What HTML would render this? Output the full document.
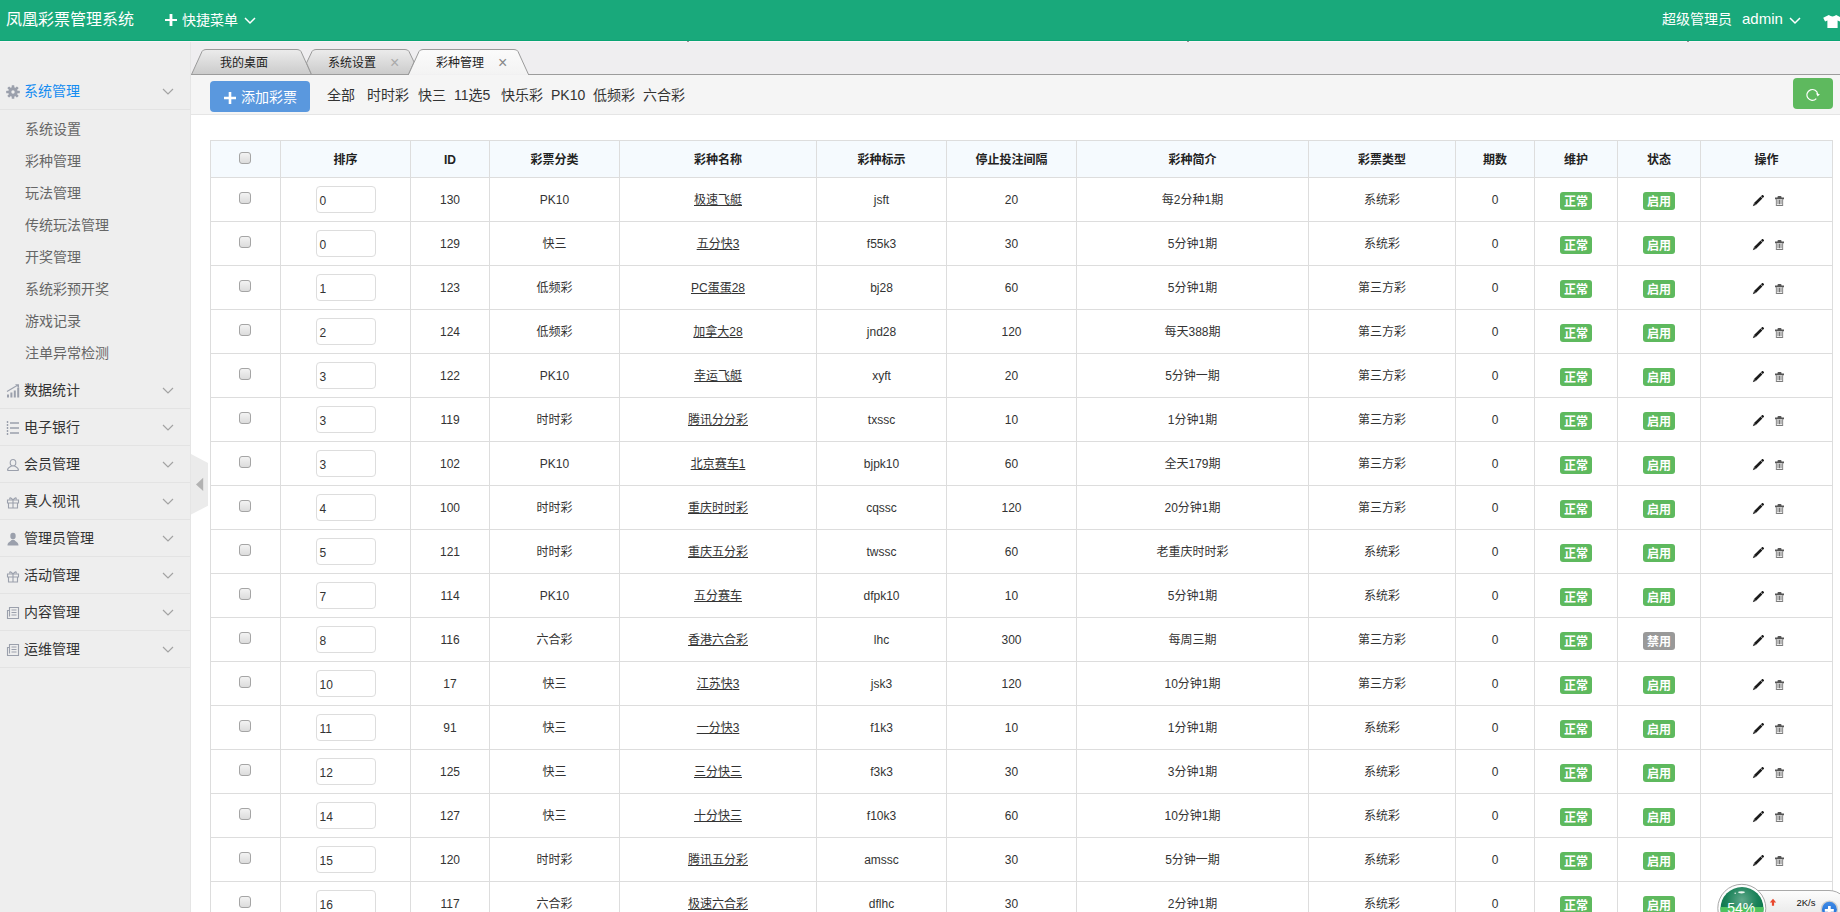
<!DOCTYPE html>
<html lang="zh-CN">
<head>
<meta charset="utf-8">
<title>凤凰彩票管理系统</title>
<style>
*{box-sizing:border-box;margin:0;padding:0}
html,body{width:1840px;height:912px;overflow:hidden;background:#fff}
body{font-family:"Liberation Sans","Noto Sans CJK SC",sans-serif;font-size:12px;color:#333;position:relative}
.abs{position:absolute}
/* header */
#hd{position:absolute;left:0;top:0;width:1840px;height:41px;background:#19a97b;color:#fff;border-bottom:1px solid #0aa473}
#hdl{position:absolute;left:0;top:41px;width:1840px;height:1px;background:#fbf3f8}
#hd .t{position:absolute;white-space:nowrap;line-height:20px}
#logo{left:6px;top:10px;font-size:16px}
#quick{left:182px;top:10px;font-size:14px}
#role{left:1662px;top:9px;font-size:14px}
#adm{left:1742px;top:9px;font-size:15px}
/* sidebar */
#sb{position:absolute;left:0;top:41px;width:191px;height:871px;background:#eeeeee;border-right:1px solid #e5e5e5}
.mh{position:absolute;left:0;width:190px;height:37px;border-bottom:1px solid #e3e3e3;font-size:14px;color:#333}
.mh span.tx{position:absolute;left:24px;top:8px;line-height:20px;white-space:nowrap}
.mh svg.mi{position:absolute;left:5.500px;top:11.500px;width:14px;height:14px}
.mh svg.ar{position:absolute;left:162px;top:14.500px;width:12px;height:8px}
.sub{position:absolute;left:25px;font-size:14px;color:#666;line-height:20px;white-space:nowrap}
/* tabs */
#tabbar{position:absolute;left:191px;top:41px;width:1649px;height:34px;background:#efeef0}
.tabline{position:absolute;left:191px;top:74px;width:1649px;height:1px;background:#9c9c9c}
.tabtx{position:absolute;top:53px;font-size:12px;line-height:20px;color:#222;white-space:nowrap}
.tabx{position:absolute;top:53px;font-size:16px;line-height:20px;color:#aaa}
/* toolbar */
#tool{position:absolute;left:191px;top:75px;width:1649px;height:40px;background:#f5f5f5;border-bottom:1px solid #e5e5e5}
#addbtn{position:absolute;left:210px;top:81px;width:100px;height:31px;border-radius:4px;background:#5a98de;color:#fff;font-size:14px;line-height:31px;white-space:nowrap}
#addbtn span{position:absolute;left:31px;top:1px}
.flt{position:absolute;top:85px;font-size:14px;line-height:20px;color:#333;white-space:nowrap}
#refbtn{position:absolute;left:1793px;top:78px;width:40px;height:31px;border-radius:4px;background:#5eb95e}
/* table */
#tb{position:absolute;left:210px;top:140px;width:1622px;border-collapse:collapse;table-layout:fixed;font-size:12px;color:#333}
#tb th,#tb td{border:1px solid #ddd;text-align:center;vertical-align:middle;padding:0;white-space:nowrap;line-height:20px}
#tb th{height:37px;background:#f5fafe;font-weight:bold;color:#222;padding-top:2px}
#tb td{height:44px}
.cb{display:inline-block;width:12px;height:12px;border:1px solid #a5a5a5;border-radius:3px;background:linear-gradient(#f3f3f3,#dcdcdc);position:relative;top:0px;left:-1px}
#tb th .cb{top:0px}
.inp{display:inline-block;width:60px;height:27px;border:1px solid #ddd;border-radius:4px;text-align:left;padding-left:3px;line-height:29px;overflow:hidden;font-size:12px;color:#333;background:#fff;vertical-align:middle}
u{text-decoration:underline}
i.z{font-style:normal;position:relative;top:0px}
.lb{display:inline-block;height:18px;line-height:21px;overflow:hidden;padding:0 4px;border-radius:3px;color:#fff;font-weight:bold;font-size:12px;position:relative;top:4px}
.ok{background:#5eb95e}
.off{background:#999}
.ic{display:inline-block;vertical-align:middle}
.pen{width:12px;height:12px;margin-right:10.500px;position:relative;top:1px;left:1.500px}
.tr{width:9px;height:10.500px;position:relative;top:0.500px;left:2px}
</style>
</head>
<body>
<div id="hd">
  <div class="t" id="logo">凤凰彩票管理系统</div>
  <svg class="abs" style="left:165px;top:14px" width="12" height="12" viewBox="0 0 12 12"><path d="M4.600 0h2.800v4.900h4.600v2.200H7.400v4.900H4.600V7.100H0V4.900h4.600z" fill="#fff"/></svg>
  <div class="t" id="quick">快捷菜单</div>
  <svg class="abs" style="left:243.500px;top:16.500px" width="12" height="8" viewBox="0 0 12 8"><path d="M1 1l5 5 5-5" fill="none" stroke="#fff" stroke-width="1.5"/></svg>
  <div class="t" id="role">超级管理员</div>
  <div class="t" id="adm">admin</div>
  <svg class="abs" style="left:1789px;top:17px" width="12" height="8" viewBox="0 0 12 8"><path d="M1 1l5 5 5-5" fill="none" stroke="#fff" stroke-width="1.5"/></svg>
  <svg class="abs" style="left:1823px;top:15px" width="19" height="13" viewBox="0 0 20 14"><path d="M6 0 Q10 3 14 0 L20 3 L18 7 L15.5 6 V14 H4.5 V6 L2 7 L0 3 Z" fill="#fff"/></svg>
</div>

<div id="sb">
  <div class="mh" style="top:32px;color:#148cf1"><svg class="mi" style="left:6px;top:12px;width:14px;height:14px" viewBox="0 0 14 14"><g fill="#9ba0ac"><rect x="5.700" y="0.200" width="2.600" height="3" rx="0.500" transform="rotate(0 7 7)"/><rect x="5.700" y="0.200" width="2.600" height="3" rx="0.500" transform="rotate(45 7 7)"/><rect x="5.700" y="0.200" width="2.600" height="3" rx="0.500" transform="rotate(90 7 7)"/><rect x="5.700" y="0.200" width="2.600" height="3" rx="0.500" transform="rotate(135 7 7)"/><rect x="5.700" y="0.200" width="2.600" height="3" rx="0.500" transform="rotate(180 7 7)"/><rect x="5.700" y="0.200" width="2.600" height="3" rx="0.500" transform="rotate(225 7 7)"/><rect x="5.700" y="0.200" width="2.600" height="3" rx="0.500" transform="rotate(270 7 7)"/><rect x="5.700" y="0.200" width="2.600" height="3" rx="0.500" transform="rotate(315 7 7)"/></g><circle cx="7" cy="7" r="3.200" fill="none" stroke="#9ba0ac" stroke-width="3"/></svg><span class="tx">系统管理</span><svg class="ar" viewBox="0 0 12 8"><path d="M1 1l5 5 5-5" fill="none" stroke="#a3a3a3" stroke-width="1.200"/></svg></div>
  <div class="sub" style="top:78px">系统设置</div>
  <div class="sub" style="top:110px">彩种管理</div>
  <div class="sub" style="top:142px">玩法管理</div>
  <div class="sub" style="top:174px">传统玩法管理</div>
  <div class="sub" style="top:206px">开奖管理</div>
  <div class="sub" style="top:238px">系统彩预开奖</div>
  <div class="sub" style="top:270px">游戏记录</div>
  <div class="sub" style="top:302px">注单异常检测</div>
  <div class="mh" style="top:331px"><svg class="mi" viewBox="0 0 14 14"><path d="M1 13.500V10.500h2V13.500zM4.400 13.500V8.500h2V13.500zM7.800 13.500V6.500h2V13.500zM11.200 13.500V3.500h2V13.500z" fill="#9ba0ac"/><path d="M1 7.500L11.500 1.200" fill="none" stroke="#9ba0ac" stroke-width="1.100"/><path d="M9 0.300h4v3.600z" fill="#9ba0ac"/></svg><span class="tx">数据统计</span><svg class="ar" viewBox="0 0 12 8"><path d="M1 1l5 5 5-5" fill="none" stroke="#a3a3a3" stroke-width="1.200"/></svg></div>
  <div class="mh" style="top:368px"><svg class="mi" viewBox="0 0 14 14"><path d="M4 2h9M4 7h9M4 12h9" stroke="#9ba0ac" stroke-width="1.6" fill="none"/><path d="M1.5 0v14" stroke="#9ba0ac" stroke-width="1.4" stroke-dasharray="2 1" fill="none"/></svg><span class="tx">电子银行</span><svg class="ar" viewBox="0 0 12 8"><path d="M1 1l5 5 5-5" fill="none" stroke="#a3a3a3" stroke-width="1.200"/></svg></div>
  <div class="mh" style="top:405px"><svg class="mi" viewBox="0 0 14 14"><path d="M7 1.5a2.8 3.2 0 0 1 0 6.4a2.8 3.2 0 0 1 0-6.4zM1.5 12.5c0-3 2.5-3.5 4-4.4M12.5 12.5c0-3-2.5-3.5-4-4.4M1.5 12.5h11" fill="none" stroke="#9ba0ac" stroke-width="1.1"/></svg><span class="tx">会员管理</span><svg class="ar" viewBox="0 0 12 8"><path d="M1 1l5 5 5-5" fill="none" stroke="#a3a3a3" stroke-width="1.200"/></svg></div>
  <div class="mh" style="top:442px"><svg class="mi" viewBox="0 0 14 14"><path d="M1.5 5h11v3h-11zM2.5 8v5h9V8M7 5v8M7 5C5 2 3 2.5 4 4.2M7 5c2-3 4-2.5 3-.8" fill="none" stroke="#9ba0ac" stroke-width="1.1"/></svg><span class="tx">真人视讯</span><svg class="ar" viewBox="0 0 12 8"><path d="M1 1l5 5 5-5" fill="none" stroke="#a3a3a3" stroke-width="1.200"/></svg></div>
  <div class="mh" style="top:479px"><svg class="mi" viewBox="0 0 14 14"><path d="M7 0.800a2.700 3.300 0 0 1 0 6.600a2.700 3.300 0 0 1 0-6.600zM1.500 13.500c0-3.600 2.700-3.200 4-5.500h3c1.300 2.300 4 1.900 4 5.500z" fill="#9ba0ac"/></svg><span class="tx">管理员管理</span><svg class="ar" viewBox="0 0 12 8"><path d="M1 1l5 5 5-5" fill="none" stroke="#a3a3a3" stroke-width="1.200"/></svg></div>
  <div class="mh" style="top:516px"><svg class="mi" viewBox="0 0 14 14"><path d="M1.5 5h11v3h-11zM2.5 8v5h9V8M7 5v8M7 5C5 2 3 2.5 4 4.2M7 5c2-3 4-2.5 3-.8" fill="none" stroke="#9ba0ac" stroke-width="1.1"/></svg><span class="tx">活动管理</span><svg class="ar" viewBox="0 0 12 8"><path d="M1 1l5 5 5-5" fill="none" stroke="#a3a3a3" stroke-width="1.200"/></svg></div>
  <div class="mh" style="top:553px"><svg class="mi" viewBox="0 0 14 14"><path d="M3.500 1.500h9v11h-11v-8h2zM3.500 1.500v9M5.500 4h5M5.500 6.500h5M5.500 9h5" fill="none" stroke="#9ba0ac" stroke-width="1.1"/></svg><span class="tx">内容管理</span><svg class="ar" viewBox="0 0 12 8"><path d="M1 1l5 5 5-5" fill="none" stroke="#a3a3a3" stroke-width="1.200"/></svg></div>
  <div class="mh" style="top:590px"><svg class="mi" viewBox="0 0 14 14"><path d="M3.500 1.500h9v11h-11v-8h2zM3.500 1.500v9M5.500 4h5M5.500 6.500h5M5.500 9h5" fill="none" stroke="#9ba0ac" stroke-width="1.1"/></svg><span class="tx">运维管理</span><svg class="ar" viewBox="0 0 12 8"><path d="M1 1l5 5 5-5" fill="none" stroke="#a3a3a3" stroke-width="1.200"/></svg></div>
</div>
<!-- collapse handle -->
<svg class="abs" style="left:191px;top:454px" width="17" height="61" viewBox="0 0 17 61"><path d="M0 0 L17 9 V51.800 L0 60.500 Z" fill="#ebebeb"/><path d="M12.200 23.800 V37 L5 30.400 Z" fill="#b2b2b2"/></svg>

<div id="tabbar"></div>
<div id="hdl"></div>
<div class="abs" style="left:687px;top:41px;width:2px;height:1px;background:#9b8d93"></div><div class="abs" style="left:1187px;top:41px;width:2px;height:1px;background:#9b8d93"></div><div class="abs" style="left:1687px;top:41px;width:2px;height:1px;background:#9b8d93"></div>
<svg class="abs" style="left:191px;top:48px" width="350" height="27" viewBox="0 0 350 27">
  <defs>
    <linearGradient id="g1" x1="0" y1="0" x2="0" y2="1"><stop offset="0" stop-color="#ececec"/><stop offset="1" stop-color="#cbcbcb"/></linearGradient>
    <linearGradient id="g2" x1="0" y1="0" x2="0" y2="1"><stop offset="0" stop-color="#fbfbfb"/><stop offset="1" stop-color="#f3f3f3"/></linearGradient>
  </defs>
  <path d="M0.500 26.500 L11 3.500 Q12 1.500 15 1.500 H106 Q109 1.500 110 3.500 L120.500 26.500 Z" fill="url(#g1)" stroke="#9a9a9a" stroke-width="1"/>
  <path d="M120.500 26.500 L115.500 15 L121 3.500 Q122 1.500 125 1.500 H214 Q217 1.500 218 3.500 L223 14 L217.500 26.500 Z" fill="url(#g1)" stroke="#9a9a9a" stroke-width="1"/>
  <path d="M217.500 26.500 L228 3.500 Q229 1.500 232 1.500 H323 Q326 1.500 327 3.500 L337.500 26.500" fill="url(#g2)" stroke="#9a9a9a" stroke-width="1"/>
</svg>
<div class="tabline" style="left:191px;width:218px"></div>
<div class="tabline" style="left:528px;width:1312px"></div>
<div class="tabtx" style="left:220px">我的桌面</div>
<div class="tabtx" style="left:328px">系统设置</div>
<div class="tabx" style="left:390px">×</div>
<div class="tabtx" style="left:436px">彩种管理</div>
<div class="tabx" style="left:498px;color:#888">×</div>

<div id="tool"></div>
<div id="addbtn"><svg class="abs" style="left:14px;top:11px" width="12" height="12" viewBox="0 0 12 12"><path d="M4.700 0h2.600v4.800h4.700v2.400H7.300v4.800H4.700V7.200H0V4.800h4.700z" fill="#fff"/></svg><span>添加彩票</span></div>
<div class="flt" style="left:327px">全部</div>
<div class="flt" style="left:367px">时时彩</div>
<div class="flt" style="left:418px">快三</div>
<div class="flt" style="left:454px">11选5</div>
<div class="flt" style="left:501px">快乐彩</div>
<div class="flt" style="left:551px">PK10</div>
<div class="flt" style="left:593px">低频彩</div>
<div class="flt" style="left:643px">六合彩</div>
<div id="refbtn"><svg class="abs" style="left:13px;top:9px" width="16" height="16" viewBox="0 0 16 16"><path d="M10.300 11.600 A5.400 5.400 0 1 1 11.700 7.300" fill="none" stroke="#fff" stroke-width="1.150"/><path d="M10 6.300 L13.900 7.200 L11.600 9.500 Z" fill="#fff"/></svg></div>

<table id="tb">
<colgroup><col style="width:70px"><col style="width:130px"><col style="width:79px"><col style="width:130px"><col style="width:197px"><col style="width:130px"><col style="width:130px"><col style="width:232px"><col style="width:147px"><col style="width:79px"><col style="width:83px"><col style="width:83px"><col style="width:132px"></colgroup>
<thead><tr><th><span class="cb"></span></th><th>排序</th><th>ID</th><th>彩票分类</th><th>彩种名称</th><th>彩种标示</th><th>停止投注间隔</th><th>彩种简介</th><th>彩票类型</th><th>期数</th><th>维护</th><th>状态</th><th>操作</th></tr></thead>
<tbody>
<tr><td><span class="cb"></span></td><td><span class="inp">0</span></td><td>130</td><td>PK10</td><td><u><i class="z">极速飞艇</i></u></td><td>jsft</td><td>20</td><td><i class="z">每</i>2<i class="z">分种</i>1<i class="z">期</i></td><td><i class="z">系统彩</i></td><td>0</td><td><span class="lb ok">正常</span></td><td><span class="lb ok">启用</span></td><td class="op"><svg class="ic pen" viewBox="0 0 12 12"><g transform="rotate(45 6 6)" fill="#1c1c1c"><rect x="4.700" y="-1.700" width="2.600" height="2.300" rx="0.400"/><rect x="4.700" y="1.100" width="2.600" height="9.200"/><path d="M4.700 10.300 H7.300 L6 13.400 Z" fill="#2a2a2a"/></g></svg><svg class="ic tr" viewBox="0 0 9 10.500"><path d="M2.500 1.500 V1 Q2.500 0 3.500 0 H5.500 Q6.500 0 6.500 1 V1.500 H9 V3.200 H0 V1.500 Z" fill="#555"/><path d="M1.350 3.200 V9.600 Q1.350 10.100 1.850 10.100 H7.150 Q7.650 10.100 7.650 9.600 V3.200" fill="none" stroke="#666" stroke-width="0.800"/><path d="M1.500 9.300 H7.500 V10.500 H1.500 Z" fill="#555"/><path d="M3 3.800 V8.300 M4.500 3.800 V8.300 M6 3.800 V8.300" stroke="#666" stroke-width="0.900" fill="none"/></svg></td></tr>
<tr><td><span class="cb"></span></td><td><span class="inp">0</span></td><td>129</td><td><i class="z">快三</i></td><td><u><i class="z">五分快</i>3</u></td><td>f55k3</td><td>30</td><td>5<i class="z">分钟</i>1<i class="z">期</i></td><td><i class="z">系统彩</i></td><td>0</td><td><span class="lb ok">正常</span></td><td><span class="lb ok">启用</span></td><td class="op"><svg class="ic pen" viewBox="0 0 12 12"><g transform="rotate(45 6 6)" fill="#1c1c1c"><rect x="4.700" y="-1.700" width="2.600" height="2.300" rx="0.400"/><rect x="4.700" y="1.100" width="2.600" height="9.200"/><path d="M4.700 10.300 H7.300 L6 13.400 Z" fill="#2a2a2a"/></g></svg><svg class="ic tr" viewBox="0 0 9 10.500"><path d="M2.500 1.500 V1 Q2.500 0 3.500 0 H5.500 Q6.500 0 6.500 1 V1.500 H9 V3.200 H0 V1.500 Z" fill="#555"/><path d="M1.350 3.200 V9.600 Q1.350 10.100 1.850 10.100 H7.150 Q7.650 10.100 7.650 9.600 V3.200" fill="none" stroke="#666" stroke-width="0.800"/><path d="M1.500 9.300 H7.500 V10.500 H1.500 Z" fill="#555"/><path d="M3 3.800 V8.300 M4.500 3.800 V8.300 M6 3.800 V8.300" stroke="#666" stroke-width="0.900" fill="none"/></svg></td></tr>
<tr><td><span class="cb"></span></td><td><span class="inp">1</span></td><td>123</td><td><i class="z">低频彩</i></td><td><u>PC<i class="z">蛋蛋</i>28</u></td><td>bj28</td><td>60</td><td>5<i class="z">分钟</i>1<i class="z">期</i></td><td><i class="z">第三方彩</i></td><td>0</td><td><span class="lb ok">正常</span></td><td><span class="lb ok">启用</span></td><td class="op"><svg class="ic pen" viewBox="0 0 12 12"><g transform="rotate(45 6 6)" fill="#1c1c1c"><rect x="4.700" y="-1.700" width="2.600" height="2.300" rx="0.400"/><rect x="4.700" y="1.100" width="2.600" height="9.200"/><path d="M4.700 10.300 H7.300 L6 13.400 Z" fill="#2a2a2a"/></g></svg><svg class="ic tr" viewBox="0 0 9 10.500"><path d="M2.500 1.500 V1 Q2.500 0 3.500 0 H5.500 Q6.500 0 6.500 1 V1.500 H9 V3.200 H0 V1.500 Z" fill="#555"/><path d="M1.350 3.200 V9.600 Q1.350 10.100 1.850 10.100 H7.150 Q7.650 10.100 7.650 9.600 V3.200" fill="none" stroke="#666" stroke-width="0.800"/><path d="M1.500 9.300 H7.500 V10.500 H1.500 Z" fill="#555"/><path d="M3 3.800 V8.300 M4.500 3.800 V8.300 M6 3.800 V8.300" stroke="#666" stroke-width="0.900" fill="none"/></svg></td></tr>
<tr><td><span class="cb"></span></td><td><span class="inp">2</span></td><td>124</td><td><i class="z">低频彩</i></td><td><u><i class="z">加拿大</i>28</u></td><td>jnd28</td><td>120</td><td><i class="z">每天</i>388<i class="z">期</i></td><td><i class="z">第三方彩</i></td><td>0</td><td><span class="lb ok">正常</span></td><td><span class="lb ok">启用</span></td><td class="op"><svg class="ic pen" viewBox="0 0 12 12"><g transform="rotate(45 6 6)" fill="#1c1c1c"><rect x="4.700" y="-1.700" width="2.600" height="2.300" rx="0.400"/><rect x="4.700" y="1.100" width="2.600" height="9.200"/><path d="M4.700 10.300 H7.300 L6 13.400 Z" fill="#2a2a2a"/></g></svg><svg class="ic tr" viewBox="0 0 9 10.500"><path d="M2.500 1.500 V1 Q2.500 0 3.500 0 H5.500 Q6.500 0 6.500 1 V1.500 H9 V3.200 H0 V1.500 Z" fill="#555"/><path d="M1.350 3.200 V9.600 Q1.350 10.100 1.850 10.100 H7.150 Q7.650 10.100 7.650 9.600 V3.200" fill="none" stroke="#666" stroke-width="0.800"/><path d="M1.500 9.300 H7.500 V10.500 H1.500 Z" fill="#555"/><path d="M3 3.800 V8.300 M4.500 3.800 V8.300 M6 3.800 V8.300" stroke="#666" stroke-width="0.900" fill="none"/></svg></td></tr>
<tr><td><span class="cb"></span></td><td><span class="inp">3</span></td><td>122</td><td>PK10</td><td><u><i class="z">幸运飞艇</i></u></td><td>xyft</td><td>20</td><td>5<i class="z">分钟一期</i></td><td><i class="z">第三方彩</i></td><td>0</td><td><span class="lb ok">正常</span></td><td><span class="lb ok">启用</span></td><td class="op"><svg class="ic pen" viewBox="0 0 12 12"><g transform="rotate(45 6 6)" fill="#1c1c1c"><rect x="4.700" y="-1.700" width="2.600" height="2.300" rx="0.400"/><rect x="4.700" y="1.100" width="2.600" height="9.200"/><path d="M4.700 10.300 H7.300 L6 13.400 Z" fill="#2a2a2a"/></g></svg><svg class="ic tr" viewBox="0 0 9 10.500"><path d="M2.500 1.500 V1 Q2.500 0 3.500 0 H5.500 Q6.500 0 6.500 1 V1.500 H9 V3.200 H0 V1.500 Z" fill="#555"/><path d="M1.350 3.200 V9.600 Q1.350 10.100 1.850 10.100 H7.150 Q7.650 10.100 7.650 9.600 V3.200" fill="none" stroke="#666" stroke-width="0.800"/><path d="M1.500 9.300 H7.500 V10.500 H1.500 Z" fill="#555"/><path d="M3 3.800 V8.300 M4.500 3.800 V8.300 M6 3.800 V8.300" stroke="#666" stroke-width="0.900" fill="none"/></svg></td></tr>
<tr><td><span class="cb"></span></td><td><span class="inp">3</span></td><td>119</td><td><i class="z">时时彩</i></td><td><u><i class="z">腾讯分分彩</i></u></td><td>txssc</td><td>10</td><td>1<i class="z">分钟</i>1<i class="z">期</i></td><td><i class="z">第三方彩</i></td><td>0</td><td><span class="lb ok">正常</span></td><td><span class="lb ok">启用</span></td><td class="op"><svg class="ic pen" viewBox="0 0 12 12"><g transform="rotate(45 6 6)" fill="#1c1c1c"><rect x="4.700" y="-1.700" width="2.600" height="2.300" rx="0.400"/><rect x="4.700" y="1.100" width="2.600" height="9.200"/><path d="M4.700 10.300 H7.300 L6 13.400 Z" fill="#2a2a2a"/></g></svg><svg class="ic tr" viewBox="0 0 9 10.500"><path d="M2.500 1.500 V1 Q2.500 0 3.500 0 H5.500 Q6.500 0 6.500 1 V1.500 H9 V3.200 H0 V1.500 Z" fill="#555"/><path d="M1.350 3.200 V9.600 Q1.350 10.100 1.850 10.100 H7.150 Q7.650 10.100 7.650 9.600 V3.200" fill="none" stroke="#666" stroke-width="0.800"/><path d="M1.500 9.300 H7.500 V10.500 H1.500 Z" fill="#555"/><path d="M3 3.800 V8.300 M4.500 3.800 V8.300 M6 3.800 V8.300" stroke="#666" stroke-width="0.900" fill="none"/></svg></td></tr>
<tr><td><span class="cb"></span></td><td><span class="inp">3</span></td><td>102</td><td>PK10</td><td><u><i class="z">北京赛车</i>1</u></td><td>bjpk10</td><td>60</td><td><i class="z">全天</i>179<i class="z">期</i></td><td><i class="z">第三方彩</i></td><td>0</td><td><span class="lb ok">正常</span></td><td><span class="lb ok">启用</span></td><td class="op"><svg class="ic pen" viewBox="0 0 12 12"><g transform="rotate(45 6 6)" fill="#1c1c1c"><rect x="4.700" y="-1.700" width="2.600" height="2.300" rx="0.400"/><rect x="4.700" y="1.100" width="2.600" height="9.200"/><path d="M4.700 10.300 H7.300 L6 13.400 Z" fill="#2a2a2a"/></g></svg><svg class="ic tr" viewBox="0 0 9 10.500"><path d="M2.500 1.500 V1 Q2.500 0 3.500 0 H5.500 Q6.500 0 6.500 1 V1.500 H9 V3.200 H0 V1.500 Z" fill="#555"/><path d="M1.350 3.200 V9.600 Q1.350 10.100 1.850 10.100 H7.150 Q7.650 10.100 7.650 9.600 V3.200" fill="none" stroke="#666" stroke-width="0.800"/><path d="M1.500 9.300 H7.500 V10.500 H1.500 Z" fill="#555"/><path d="M3 3.800 V8.300 M4.500 3.800 V8.300 M6 3.800 V8.300" stroke="#666" stroke-width="0.900" fill="none"/></svg></td></tr>
<tr><td><span class="cb"></span></td><td><span class="inp">4</span></td><td>100</td><td><i class="z">时时彩</i></td><td><u><i class="z">重庆时时彩</i></u></td><td>cqssc</td><td>120</td><td>20<i class="z">分钟</i>1<i class="z">期</i></td><td><i class="z">第三方彩</i></td><td>0</td><td><span class="lb ok">正常</span></td><td><span class="lb ok">启用</span></td><td class="op"><svg class="ic pen" viewBox="0 0 12 12"><g transform="rotate(45 6 6)" fill="#1c1c1c"><rect x="4.700" y="-1.700" width="2.600" height="2.300" rx="0.400"/><rect x="4.700" y="1.100" width="2.600" height="9.200"/><path d="M4.700 10.300 H7.300 L6 13.400 Z" fill="#2a2a2a"/></g></svg><svg class="ic tr" viewBox="0 0 9 10.500"><path d="M2.500 1.500 V1 Q2.500 0 3.500 0 H5.500 Q6.500 0 6.500 1 V1.500 H9 V3.200 H0 V1.500 Z" fill="#555"/><path d="M1.350 3.200 V9.600 Q1.350 10.100 1.850 10.100 H7.150 Q7.650 10.100 7.650 9.600 V3.200" fill="none" stroke="#666" stroke-width="0.800"/><path d="M1.500 9.300 H7.500 V10.500 H1.500 Z" fill="#555"/><path d="M3 3.800 V8.300 M4.500 3.800 V8.300 M6 3.800 V8.300" stroke="#666" stroke-width="0.900" fill="none"/></svg></td></tr>
<tr><td><span class="cb"></span></td><td><span class="inp">5</span></td><td>121</td><td><i class="z">时时彩</i></td><td><u><i class="z">重庆五分彩</i></u></td><td>twssc</td><td>60</td><td><i class="z">老重庆时时彩</i></td><td><i class="z">系统彩</i></td><td>0</td><td><span class="lb ok">正常</span></td><td><span class="lb ok">启用</span></td><td class="op"><svg class="ic pen" viewBox="0 0 12 12"><g transform="rotate(45 6 6)" fill="#1c1c1c"><rect x="4.700" y="-1.700" width="2.600" height="2.300" rx="0.400"/><rect x="4.700" y="1.100" width="2.600" height="9.200"/><path d="M4.700 10.300 H7.300 L6 13.400 Z" fill="#2a2a2a"/></g></svg><svg class="ic tr" viewBox="0 0 9 10.500"><path d="M2.500 1.500 V1 Q2.500 0 3.500 0 H5.500 Q6.500 0 6.500 1 V1.500 H9 V3.200 H0 V1.500 Z" fill="#555"/><path d="M1.350 3.200 V9.600 Q1.350 10.100 1.850 10.100 H7.150 Q7.650 10.100 7.650 9.600 V3.200" fill="none" stroke="#666" stroke-width="0.800"/><path d="M1.500 9.300 H7.500 V10.500 H1.500 Z" fill="#555"/><path d="M3 3.800 V8.300 M4.500 3.800 V8.300 M6 3.800 V8.300" stroke="#666" stroke-width="0.900" fill="none"/></svg></td></tr>
<tr><td><span class="cb"></span></td><td><span class="inp">7</span></td><td>114</td><td>PK10</td><td><u><i class="z">五分赛车</i></u></td><td>dfpk10</td><td>10</td><td>5<i class="z">分钟</i>1<i class="z">期</i></td><td><i class="z">系统彩</i></td><td>0</td><td><span class="lb ok">正常</span></td><td><span class="lb ok">启用</span></td><td class="op"><svg class="ic pen" viewBox="0 0 12 12"><g transform="rotate(45 6 6)" fill="#1c1c1c"><rect x="4.700" y="-1.700" width="2.600" height="2.300" rx="0.400"/><rect x="4.700" y="1.100" width="2.600" height="9.200"/><path d="M4.700 10.300 H7.300 L6 13.400 Z" fill="#2a2a2a"/></g></svg><svg class="ic tr" viewBox="0 0 9 10.500"><path d="M2.500 1.500 V1 Q2.500 0 3.500 0 H5.500 Q6.500 0 6.500 1 V1.500 H9 V3.200 H0 V1.500 Z" fill="#555"/><path d="M1.350 3.200 V9.600 Q1.350 10.100 1.850 10.100 H7.150 Q7.650 10.100 7.650 9.600 V3.200" fill="none" stroke="#666" stroke-width="0.800"/><path d="M1.500 9.300 H7.500 V10.500 H1.500 Z" fill="#555"/><path d="M3 3.800 V8.300 M4.500 3.800 V8.300 M6 3.800 V8.300" stroke="#666" stroke-width="0.900" fill="none"/></svg></td></tr>
<tr><td><span class="cb"></span></td><td><span class="inp">8</span></td><td>116</td><td><i class="z">六合彩</i></td><td><u><i class="z">香港六合彩</i></u></td><td>lhc</td><td>300</td><td><i class="z">每周三期</i></td><td><i class="z">第三方彩</i></td><td>0</td><td><span class="lb ok">正常</span></td><td><span class="lb off">禁用</span></td><td class="op"><svg class="ic pen" viewBox="0 0 12 12"><g transform="rotate(45 6 6)" fill="#1c1c1c"><rect x="4.700" y="-1.700" width="2.600" height="2.300" rx="0.400"/><rect x="4.700" y="1.100" width="2.600" height="9.200"/><path d="M4.700 10.300 H7.300 L6 13.400 Z" fill="#2a2a2a"/></g></svg><svg class="ic tr" viewBox="0 0 9 10.500"><path d="M2.500 1.500 V1 Q2.500 0 3.500 0 H5.500 Q6.500 0 6.500 1 V1.500 H9 V3.200 H0 V1.500 Z" fill="#555"/><path d="M1.350 3.200 V9.600 Q1.350 10.100 1.850 10.100 H7.150 Q7.650 10.100 7.650 9.600 V3.200" fill="none" stroke="#666" stroke-width="0.800"/><path d="M1.500 9.300 H7.500 V10.500 H1.500 Z" fill="#555"/><path d="M3 3.800 V8.300 M4.500 3.800 V8.300 M6 3.800 V8.300" stroke="#666" stroke-width="0.900" fill="none"/></svg></td></tr>
<tr><td><span class="cb"></span></td><td><span class="inp">10</span></td><td>17</td><td><i class="z">快三</i></td><td><u><i class="z">江苏快</i>3</u></td><td>jsk3</td><td>120</td><td>10<i class="z">分钟</i>1<i class="z">期</i></td><td><i class="z">第三方彩</i></td><td>0</td><td><span class="lb ok">正常</span></td><td><span class="lb ok">启用</span></td><td class="op"><svg class="ic pen" viewBox="0 0 12 12"><g transform="rotate(45 6 6)" fill="#1c1c1c"><rect x="4.700" y="-1.700" width="2.600" height="2.300" rx="0.400"/><rect x="4.700" y="1.100" width="2.600" height="9.200"/><path d="M4.700 10.300 H7.300 L6 13.400 Z" fill="#2a2a2a"/></g></svg><svg class="ic tr" viewBox="0 0 9 10.500"><path d="M2.500 1.500 V1 Q2.500 0 3.500 0 H5.500 Q6.500 0 6.500 1 V1.500 H9 V3.200 H0 V1.500 Z" fill="#555"/><path d="M1.350 3.200 V9.600 Q1.350 10.100 1.850 10.100 H7.150 Q7.650 10.100 7.650 9.600 V3.200" fill="none" stroke="#666" stroke-width="0.800"/><path d="M1.500 9.300 H7.500 V10.500 H1.500 Z" fill="#555"/><path d="M3 3.800 V8.300 M4.500 3.800 V8.300 M6 3.800 V8.300" stroke="#666" stroke-width="0.900" fill="none"/></svg></td></tr>
<tr><td><span class="cb"></span></td><td><span class="inp">11</span></td><td>91</td><td><i class="z">快三</i></td><td><u><i class="z">一分快</i>3</u></td><td>f1k3</td><td>10</td><td>1<i class="z">分钟</i>1<i class="z">期</i></td><td><i class="z">系统彩</i></td><td>0</td><td><span class="lb ok">正常</span></td><td><span class="lb ok">启用</span></td><td class="op"><svg class="ic pen" viewBox="0 0 12 12"><g transform="rotate(45 6 6)" fill="#1c1c1c"><rect x="4.700" y="-1.700" width="2.600" height="2.300" rx="0.400"/><rect x="4.700" y="1.100" width="2.600" height="9.200"/><path d="M4.700 10.300 H7.300 L6 13.400 Z" fill="#2a2a2a"/></g></svg><svg class="ic tr" viewBox="0 0 9 10.500"><path d="M2.500 1.500 V1 Q2.500 0 3.500 0 H5.500 Q6.500 0 6.500 1 V1.500 H9 V3.200 H0 V1.500 Z" fill="#555"/><path d="M1.350 3.200 V9.600 Q1.350 10.100 1.850 10.100 H7.150 Q7.650 10.100 7.650 9.600 V3.200" fill="none" stroke="#666" stroke-width="0.800"/><path d="M1.500 9.300 H7.500 V10.500 H1.500 Z" fill="#555"/><path d="M3 3.800 V8.300 M4.500 3.800 V8.300 M6 3.800 V8.300" stroke="#666" stroke-width="0.900" fill="none"/></svg></td></tr>
<tr><td><span class="cb"></span></td><td><span class="inp">12</span></td><td>125</td><td><i class="z">快三</i></td><td><u><i class="z">三分快三</i></u></td><td>f3k3</td><td>30</td><td>3<i class="z">分钟</i>1<i class="z">期</i></td><td><i class="z">系统彩</i></td><td>0</td><td><span class="lb ok">正常</span></td><td><span class="lb ok">启用</span></td><td class="op"><svg class="ic pen" viewBox="0 0 12 12"><g transform="rotate(45 6 6)" fill="#1c1c1c"><rect x="4.700" y="-1.700" width="2.600" height="2.300" rx="0.400"/><rect x="4.700" y="1.100" width="2.600" height="9.200"/><path d="M4.700 10.300 H7.300 L6 13.400 Z" fill="#2a2a2a"/></g></svg><svg class="ic tr" viewBox="0 0 9 10.500"><path d="M2.500 1.500 V1 Q2.500 0 3.500 0 H5.500 Q6.500 0 6.500 1 V1.500 H9 V3.200 H0 V1.500 Z" fill="#555"/><path d="M1.350 3.200 V9.600 Q1.350 10.100 1.850 10.100 H7.150 Q7.650 10.100 7.650 9.600 V3.200" fill="none" stroke="#666" stroke-width="0.800"/><path d="M1.500 9.300 H7.500 V10.500 H1.500 Z" fill="#555"/><path d="M3 3.800 V8.300 M4.500 3.800 V8.300 M6 3.800 V8.300" stroke="#666" stroke-width="0.900" fill="none"/></svg></td></tr>
<tr><td><span class="cb"></span></td><td><span class="inp">14</span></td><td>127</td><td><i class="z">快三</i></td><td><u><i class="z">十分快三</i></u></td><td>f10k3</td><td>60</td><td>10<i class="z">分钟</i>1<i class="z">期</i></td><td><i class="z">系统彩</i></td><td>0</td><td><span class="lb ok">正常</span></td><td><span class="lb ok">启用</span></td><td class="op"><svg class="ic pen" viewBox="0 0 12 12"><g transform="rotate(45 6 6)" fill="#1c1c1c"><rect x="4.700" y="-1.700" width="2.600" height="2.300" rx="0.400"/><rect x="4.700" y="1.100" width="2.600" height="9.200"/><path d="M4.700 10.300 H7.300 L6 13.400 Z" fill="#2a2a2a"/></g></svg><svg class="ic tr" viewBox="0 0 9 10.500"><path d="M2.500 1.500 V1 Q2.500 0 3.500 0 H5.500 Q6.500 0 6.500 1 V1.500 H9 V3.200 H0 V1.500 Z" fill="#555"/><path d="M1.350 3.200 V9.600 Q1.350 10.100 1.850 10.100 H7.150 Q7.650 10.100 7.650 9.600 V3.200" fill="none" stroke="#666" stroke-width="0.800"/><path d="M1.500 9.300 H7.500 V10.500 H1.500 Z" fill="#555"/><path d="M3 3.800 V8.300 M4.500 3.800 V8.300 M6 3.800 V8.300" stroke="#666" stroke-width="0.900" fill="none"/></svg></td></tr>
<tr><td><span class="cb"></span></td><td><span class="inp">15</span></td><td>120</td><td><i class="z">时时彩</i></td><td><u><i class="z">腾讯五分彩</i></u></td><td>amssc</td><td>30</td><td>5<i class="z">分钟一期</i></td><td><i class="z">系统彩</i></td><td>0</td><td><span class="lb ok">正常</span></td><td><span class="lb ok">启用</span></td><td class="op"><svg class="ic pen" viewBox="0 0 12 12"><g transform="rotate(45 6 6)" fill="#1c1c1c"><rect x="4.700" y="-1.700" width="2.600" height="2.300" rx="0.400"/><rect x="4.700" y="1.100" width="2.600" height="9.200"/><path d="M4.700 10.300 H7.300 L6 13.400 Z" fill="#2a2a2a"/></g></svg><svg class="ic tr" viewBox="0 0 9 10.500"><path d="M2.500 1.500 V1 Q2.500 0 3.500 0 H5.500 Q6.500 0 6.500 1 V1.500 H9 V3.200 H0 V1.500 Z" fill="#555"/><path d="M1.350 3.200 V9.600 Q1.350 10.100 1.850 10.100 H7.150 Q7.650 10.100 7.650 9.600 V3.200" fill="none" stroke="#666" stroke-width="0.800"/><path d="M1.500 9.300 H7.500 V10.500 H1.500 Z" fill="#555"/><path d="M3 3.800 V8.300 M4.500 3.800 V8.300 M6 3.800 V8.300" stroke="#666" stroke-width="0.900" fill="none"/></svg></td></tr>
<tr><td><span class="cb"></span></td><td><span class="inp">16</span></td><td>117</td><td><i class="z">六合彩</i></td><td><u><i class="z">极速六合彩</i></u></td><td>dflhc</td><td>30</td><td>2<i class="z">分钟</i>1<i class="z">期</i></td><td><i class="z">系统彩</i></td><td>0</td><td><span class="lb ok">正常</span></td><td><span class="lb ok">启用</span></td><td class="op"><svg class="ic pen" viewBox="0 0 12 12"><g transform="rotate(45 6 6)" fill="#1c1c1c"><rect x="4.700" y="-1.700" width="2.600" height="2.300" rx="0.400"/><rect x="4.700" y="1.100" width="2.600" height="9.200"/><path d="M4.700 10.300 H7.300 L6 13.400 Z" fill="#2a2a2a"/></g></svg><svg class="ic tr" viewBox="0 0 9 10.500"><path d="M2.500 1.500 V1 Q2.500 0 3.500 0 H5.500 Q6.500 0 6.500 1 V1.500 H9 V3.200 H0 V1.500 Z" fill="#555"/><path d="M1.350 3.200 V9.600 Q1.350 10.100 1.850 10.100 H7.150 Q7.650 10.100 7.650 9.600 V3.200" fill="none" stroke="#666" stroke-width="0.800"/><path d="M1.500 9.300 H7.500 V10.500 H1.500 Z" fill="#555"/><path d="M3 3.800 V8.300 M4.500 3.800 V8.300 M6 3.800 V8.300" stroke="#666" stroke-width="0.900" fill="none"/></svg></td></tr>
</tbody>
</table>

<!-- floating widget -->
<svg class="abs" style="left:1710px;top:880px" width="130" height="32" viewBox="0 0 130 32">
  <defs>
    <linearGradient id="wp" x1="0" y1="0" x2="0" y2="1"><stop offset="0" stop-color="#fdfdfd"/><stop offset="0.500" stop-color="#ededed"/><stop offset="1" stop-color="#dcdcdc"/></linearGradient>
    <radialGradient id="wb" cx="0.500" cy="0.300" r="0.600"><stop offset="0" stop-color="#5fa88a"/><stop offset="0.600" stop-color="#1a8158"/><stop offset="1" stop-color="#077347"/></radialGradient>
    <linearGradient id="wc" x1="0" y1="0" x2="0" y2="1"><stop offset="0" stop-color="#3f8ae6"/><stop offset="1" stop-color="#1f6fd6"/></linearGradient>
    <clipPath id="wk"><circle cx="32" cy="28.500" r="21.500"/></clipPath>
  </defs>
  <rect x="18" y="10.500" width="121" height="40" rx="20" fill="url(#wp)" stroke="#a9a9a9" stroke-width="1"/>
  <circle cx="31.800" cy="28.300" r="24" fill="#fff" stroke="#9d9d9d" stroke-width="0.900"/>
  <circle cx="32" cy="28.500" r="21.500" fill="url(#wb)"/>
  <rect x="8" y="27" width="48" height="10" fill="#4ec35f" clip-path="url(#wk)"/>
  <ellipse cx="31.500" cy="12.300" rx="3.300" ry="1.100" fill="#e9f5ee"/>
  <circle cx="25.200" cy="13.200" r="0.800" fill="#d6ebdf"/>
  <text x="31.200" y="33.200" text-anchor="middle" font-family="Liberation Sans, sans-serif" font-size="14" fill="#fff">54%</text>
  <path d="M63 18.800 L66.200 22.400 H64.100 V25.800 H61.900 V22.400 H59.800 Z" fill="#e8482e"/>
  <text x="86.500" y="25.700" font-family="Liberation Sans, sans-serif" font-size="9.500" fill="#111">2K/s</text>
  <circle cx="119.400" cy="29.200" r="8.700" fill="#cfcfcf"/>
  <circle cx="119.400" cy="29.200" r="7.400" fill="url(#wc)"/>
  <path d="M118.100 25.900 h2.600 v3.100 h3.100 v2.800 h-3.100 v3.100 h-2.800 v-3.100 h-3.100 v-2.800 h3.100 z" fill="#fff"/>
</svg>
</body>
</html>
